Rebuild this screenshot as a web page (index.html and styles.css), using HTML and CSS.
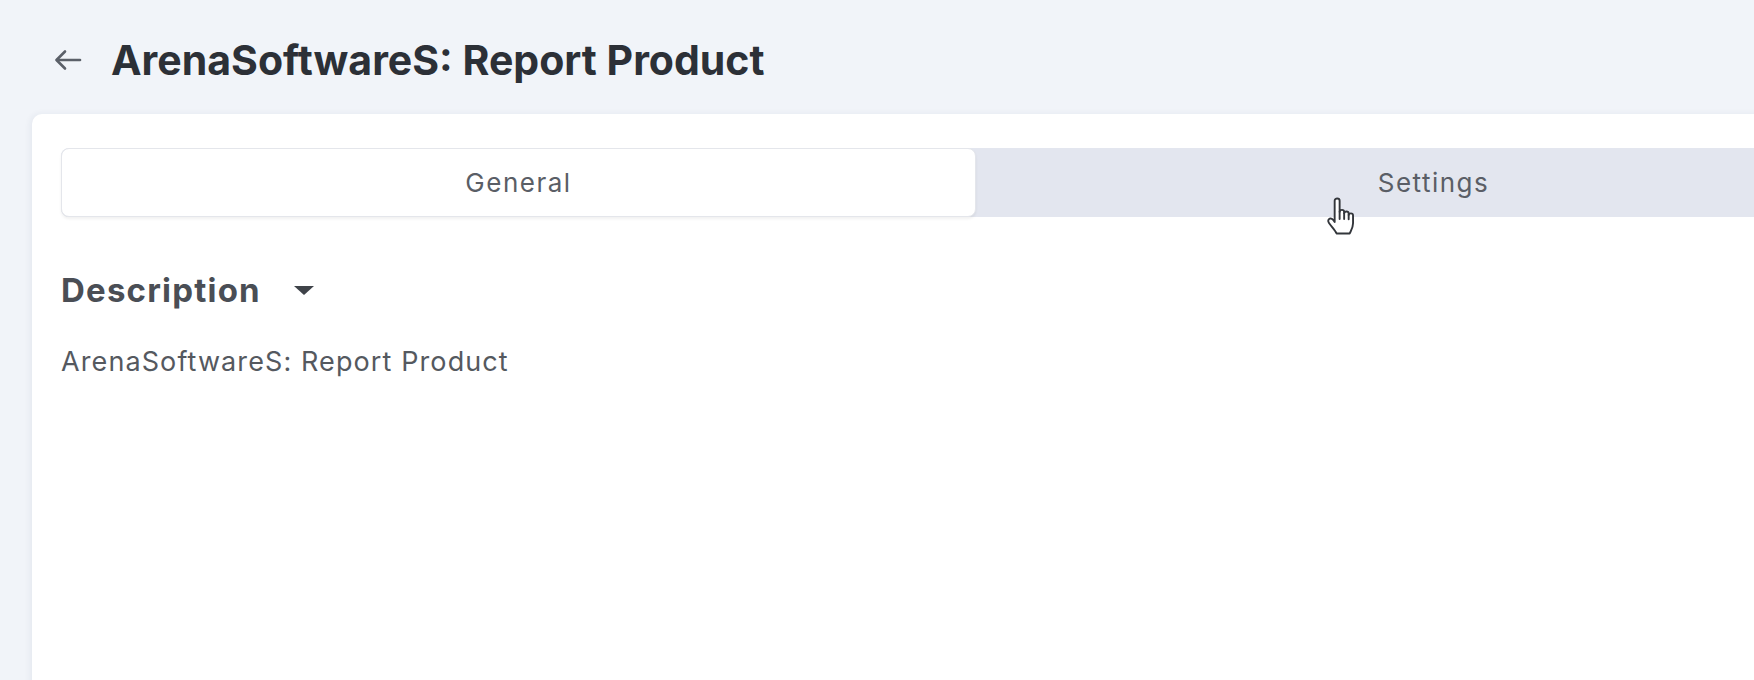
FILE: index.html
```html
<!DOCTYPE html>
<html lang="en">
<head>
    <meta charset="UTF-8">
    <meta name="viewport" content="width=device-width, initial-scale=1.0">
    <title>ArenaSoftwareS: Report Product</title>
    <link rel="stylesheet" href="styles.css">
</head>
<body>
    <header class="page-header">
        <button class="back" aria-label="Back">
            <svg width="30" height="24" viewBox="0 0 30 24" fill="none" stroke="#5b6069" stroke-width="2.6" stroke-linecap="round" stroke-linejoin="round">
                <path d="M27 12H4"/>
                <path d="M12 3.5L3.5 12L12 20.5"/>
            </svg>
        </button>
        <h1 class="title">ArenaSoftwareS: Report Product</h1>
    </header>

    <main class="card">
        <div class="tabs">
            <div class="tab active">General</div>
            <div class="tab">Settings</div>
            <!-- pointer sitting over the tab strip -->
            <svg class="cursor" width="35" height="41" viewBox="0 0 24 28" fill="#fff" stroke="#33363b" stroke-width="1.3" stroke-linejoin="round" stroke-linecap="round">
                <path d="M8 2.5C8 1.5 9 1 9.7 1s1.7.5 1.7 1.5V10c.2-.8.9-1.2 1.6-1.2.8 0 1.5.5 1.5 1.4v.8c.2-.7.9-1.1 1.6-1.1.8 0 1.5.5 1.5 1.4v.9c.2-.6.8-1 1.5-1 .8 0 1.5.6 1.5 1.4V18c0 3.5-1.8 5.5-2.3 7H9.3C8.6 23 6 20.5 4 17.6c-.8-1.2-.4-2.4.6-2.8.8-.3 1.7.1 2.4.9L8 17V2.5z"/>
                <path d="M11.4 10v5M14.5 11v4M17.6 12.2v3" fill="none"/>
            </svg>
        </div>

        <section class="section">
            <div class="section-head">
                <h2>Description</h2>
                <span class="caret"></span>
            </div>
            <p class="section-text">ArenaSoftwareS: Report Product</p>
        </section>
    </main>
</body>
</html>
```

FILE: styles.css
```css
html, body {
    height: 100%;
}
body {
    margin: 0;
    background-color: #f1f4f9;
    font-family: Inter, "Noto Sans", sans-serif;
    color: #2c3037;
    overflow: hidden;
}
.page-header {
    display: flex;
    align-items: center;
    gap: 28px;
    height: 114px;
    padding: 6px 0 0 53px;
    box-sizing: border-box;
}
.back {
    display: flex;
    padding: 0;
    border: none;
    background: none;
    cursor: pointer;
}
.title {
    margin: 0;
    font-size: 41px;
    font-weight: 700;
    color: #2c3037;
}
.card {
    margin-left: 32px;
    width: 1900px;
    height: 600px;
    background-color: #fff;
    border-radius: 10px 0 0 0;
    box-shadow: -2px 0 6px rgba(30, 50, 90, 0.06);
    padding: 34px 0 0 29px;
    box-sizing: border-box;
}
.tabs {
    position: relative;
    display: grid;
    grid-template-columns: 1fr 1fr;
    width: 1830px;
    height: 69px;
    background-color: #e3e6ef;
    border-radius: 8px;
}
.tab {
    display: flex;
    align-items: center;
    justify-content: center;
    font-size: 26px;
    letter-spacing: 1.5px;
    color: #5a5e66;
    cursor: pointer;
}
.tab.active {
    background-color: #fff;
    border: 1px solid #e4e6eb;
    border-radius: 8px;
    box-shadow: 0 2px 3px rgba(0, 0, 0, 0.06);
}
.cursor {
    position: absolute;
    left: 1262px;
    top: 49px;
}
.section {
    padding-top: 53px;
}
.section-head {
    display: flex;
    align-items: center;
    gap: 33px;
}
.section-head h2 {
    margin: 0;
    font-size: 33px;
    font-weight: 700;
    letter-spacing: 1.2px;
    color: #4a4e55;
}
.caret {
    width: 0;
    height: 0;
    border-left: 10px solid transparent;
    border-right: 10px solid transparent;
    border-top: 9px solid #3f4349;
}
.section-text {
    margin: 35px 0 0;
    font-size: 27px;
    letter-spacing: 1.1px;
    color: #55595f;
}
```
